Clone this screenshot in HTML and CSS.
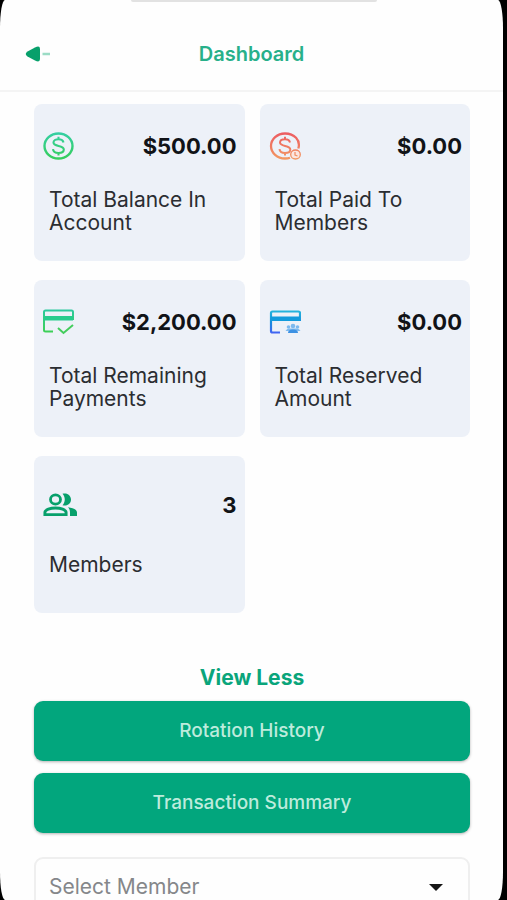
FILE: index.html
```html
<!DOCTYPE html>
<html lang="en">
<head>
<meta charset="utf-8">
<meta name="viewport" content="width=device-width, initial-scale=1">
<title>Dashboard</title>
<link rel="stylesheet" href="styles.css">
</head>
<body>
<div class="screen">
  <div class="notch"></div>
  <header class="header">
    <a class="back" href="#" aria-label="Back">
      <svg width="26" height="18" viewBox="0 0 26 18">
        <path d="M2.500 6.500 10 2.500Q15 0 15 4v10q0 4-5 1.500L2.500 11.500Q-1 9 2.500 6.500Z" fill="#07a06b"/>
        <path d="M17.500 9H25" stroke="#9bdcc5" stroke-width="2.500"/>
      </svg>
    </a>
    <h1 class="title">Dashboard</h1>
  </header>
  <main class="content">
    <section class="cards">
      <article class="card">
        <div class="card-top">
          <svg class="icon" width="31" height="28" viewBox="0 0 31 28" fill="none" stroke="url(#green)">
            <defs><linearGradient id="green" gradientUnits="userSpaceOnUse" x1="0" y1="0" x2="0" y2="28"><stop stop-color="#35cfa5"/><stop offset="1" stop-color="#35ce58"/></linearGradient></defs>
            <ellipse cx="15.500" cy="14" rx="14" ry="12.500" stroke-width="2.400"/>
            <path d="M20.500 10.500C20 8 18 7.200 15.500 7.200c-3 0-5 1.200-5 3.300 0 4.500 10.300 2.300 10.300 7 0 2.200-2.300 3.500-5.300 3.500-3.200 0-5.300-1.300-5.500-3.800M15.500 4.800v2.400M15.500 21v2.500" stroke-width="2.100"/>
          </svg>
          <strong class="value">$500.00</strong>
        </div>
        <p class="label">Total Balance In Account</p>
      </article>
      <article class="card">
        <div class="card-top">
          <svg class="icon" width="32" height="28" viewBox="0 0 32 28" fill="none" stroke="url(#red)">
            <defs><linearGradient id="red" gradientUnits="userSpaceOnUse" x1="0" y1="0" x2="0" y2="28"><stop stop-color="#ec5a62"/><stop offset="1" stop-color="#f39a61"/></linearGradient></defs>
            <path d="M29.300 16.500C32 8 25 1.500 16 1.500 8.300 1.500 2 7 2 14s6.300 12.500 14 12.500q3 0 5-.8" stroke-width="2.300"/>
            <path d="M21 10.500C20.500 8 18.500 7.200 16 7.200c-3 0-5 1.200-5 3.300 0 4.500 10.300 2.300 10.300 7 0 2.200-2.300 3.500-5.300 3.500-3.200 0-5.300-1.300-5.500-3.800M16 4.800v2.400M16 21v2.500" stroke-width="2"/>
            <ellipse cx="26.500" cy="22.500" rx="4.800" ry="4.500" fill="#fbe6e0" stroke-width="1.300"/>
            <path d="M26 20v3l2.500 1" stroke-width="1.200"/>
          </svg>
          <strong class="value">$0.00</strong>
        </div>
        <p class="label">Total Paid To Members</p>
      </article>
      <article class="card">
        <div class="card-top">
          <svg class="icon" width="31" height="26" viewBox="0 0 31 26" fill="none">
            <defs><linearGradient id="pay" gradientUnits="userSpaceOnUse" x1="0" y1="0" x2="0" y2="26"><stop stop-color="#2bc9a0"/><stop offset="1" stop-color="#3fd14c"/></linearGradient></defs>
            <path d="M30 11V3q0-1.500-1.500-1.500h-26Q1 1.500 1 3v18q0 1.500 1.500 1.500H10" stroke="url(#pay)" stroke-width="2"/>
            <path d="M1 7h29v4.500H1Z" fill="#27cc8d"/>
            <path d="m15 19 5.500 5L30 16" stroke="#43cd5c" stroke-width="2"/>
          </svg>
          <strong class="value">$2,200.00</strong>
        </div>
        <p class="label">Total Remaining Payments</p>
      </article>
      <article class="card">
        <div class="card-top">
          <svg class="icon" width="32" height="24" viewBox="0 0 32 24" fill="none">
            <defs><linearGradient id="blue" gradientUnits="userSpaceOnUse" x1="0" y1="0" x2="0" y2="24"><stop stop-color="#27b8dc"/><stop offset=".5" stop-color="#168edc"/><stop offset="1" stop-color="#4560f5"/></linearGradient></defs>
            <path d="M31 11V3q0-1.500-1.500-1.500h-26Q2 1.500 2 3v18q0 1.500 1.500 1.500H11" stroke="url(#blue)" stroke-width="2.200"/>
            <path d="M2 6.500h29V11H2Z" fill="#139bdc"/>
            <g fill="#7db9ee"><circle cx="19.500" cy="17" r="1.800"/><circle cx="24" cy="16" r="2.300"/><circle cx="28.500" cy="17" r="1.800"/><path d="M16.500 21q1-2.500 4-2.500h7q3 0 4 2.500Z"/></g>
            <path d="M19 23q0-3.500 5-3.500t5 3.500Z" fill="#3c91e3"/>
          </svg>
          <strong class="value">$0.00</strong>
        </div>
        <p class="label">Total Reserved Amount</p>
      </article>
      <article class="card">
        <div class="card-top">
          <svg class="icon" width="34" height="24" viewBox="0 0 34 24" fill="none">
            <ellipse cx="12.500" cy="6.500" rx="5" ry="4.600" stroke="#07a06b" stroke-width="2.800"/>
            <path d="M1.900 21.600v-2.200c0-2.600 5.600-4.400 10.600-4.400s10.600 1.800 10.600 4.400v2.200Z" stroke="#07a06b" stroke-width="2.900"/>
            <path d="M19.500.8c4.600-1.400 8.500 1.600 8.500 5.700s-3.900 7.100-8.500 5.700c3-3.200 3-8.200 0-11.400ZM25 14.200c5 .6 9 2.400 9 5.200V23h-7v-3.600c0-2-.7-3.800-2-5.200Z" fill="#07a06b"/>
          </svg>
          <strong class="value">3</strong>
        </div>
        <p class="label">Members</p>
      </article>
    </section>
    <button class="toggle" type="button">View Less</button>
    <div class="actions">
      <button class="action" type="button">Rotation History</button>
      <button class="action" type="button">Transaction Summary</button>
    </div>
    <div class="picker">
      <select class="select" aria-label="Select Member"><option>Select Member</option></select>
      <svg class="caret" width="14" height="7" viewBox="0 0 14 7"><path d="M0 0h14L7 7Z" fill="#151515"/></svg>
    </div>
  </main>
</div>
</body>
</html>
```
FILE: styles.css
```css
* {
  box-sizing: border-box;
}

body {
  margin: 0;
  background: #000;
  font-family: Inter, "Liberation Sans", sans-serif;
  color: #2b2d31;
}

.screen {
  position: relative;
  height: 100vh;
  margin-right: 4px;
  overflow: hidden;
  background: #fefefe;
  border-radius: 5px / 28px;
}

.notch {
  position: absolute;
  top: 0;
  left: 26%;
  right: 25%;
  height: 2px;
  background: #e2e2e2;
  border-radius: 0 0 4px 4px;
}

.header {
  display: grid;
  grid-template-columns: 1fr auto 1fr;
  align-items: center;
  height: 92px;
  padding: 17px 25px 0;
  border-bottom: 2px solid #f4f4f4;
}

.back {
  display: flex;
}

.title {
  margin: 0;
  font-size: 20px;
  line-height: 24px;
  font-weight: 600;
  color: #27b08a;
}

.content {
  padding: 12px 33px 0 34px;
}

.cards {
  display: grid;
  grid-template-columns: 1fr 1fr;
  grid-auto-rows: 157px;
  gap: 19px 15px;
}

.card {
  display: flex;
  flex-direction: column;
  justify-content: space-evenly;
  padding: 0 8px 0 9px;
  background: #edf1f8;
  border-radius: 8px;
}

.card-top {
  display: flex;
  align-items: center;
  justify-content: space-between;
  height: 29px;
}

.icon {
  flex: none;
}

.value {
  font-size: 22px;
  line-height: 24px;
  font-weight: 700;
  color: #111317;
}

.label {
  min-height: 26px;
  margin: 0;
  padding: 0 6px;
  font-size: 21px;
  line-height: 23px;
}

.toggle {
  display: block;
  margin: 53px auto 11px;
  padding: 0;
  border: 0;
  background: none;
  font: 700 21px/24px Inter, "Liberation Sans", sans-serif;
  color: #0aa57b;
}

.actions {
  display: grid;
  gap: 12px;
}

.action {
  height: 60px;
  border: 0;
  border-radius: 9px;
  background: #02a67d;
  box-shadow: 0 1px 3px rgba(0, 0, 0, 0.3);
  font: 500 19px/24px Inter, "Liberation Sans", sans-serif;
  color: #bdebdc;
}

.picker {
  position: relative;
  margin-top: 24px;
}

.select {
  width: 100%;
  height: 60px;
  padding: 0 13px;
  appearance: none;
  border: 2px solid #efefef;
  border-radius: 9px;
  background: #fefefe;
  font: 400 21px/24px Inter, "Liberation Sans", sans-serif;
  color: #85878a;
}

.caret {
  position: absolute;
  top: 27px;
  right: 27px;
  pointer-events: none;
}
```
